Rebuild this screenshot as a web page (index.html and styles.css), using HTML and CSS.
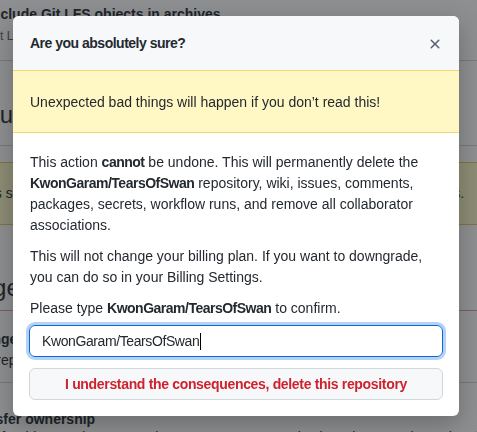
FILE: index.html
```html
<!DOCTYPE html>
<html lang="en">
<head>
<meta charset="utf-8">
<title>Delete repository</title>
<link rel="stylesheet" href="styles.css">
</head>
<body>
<div class="page">
  <div class="check-row">
    <div class="check-label">Include Git LFS objects in archives</div>
    <div class="check-note">Git LFS objects will be included in ZIP and tar archives downloaded for this repository.</div>
  </div>
  <div class="subhead">Default branch</div>
  <div class="page-flash">Rules set here apply to the default branch of this repository and all pull requests.</div>
  <div class="danger-head">Danger Zone</div>
  <div class="danger-box">
    <div class="danger-item first">
      <div class="item-title">Change repository visibility</div>
      <div class="item-desc">This repository is currently public.</div>
    </div>
    <div class="danger-item">
      <div class="item-title">Transfer ownership</div>
      <div class="item-desc">Transfer this repository to another user or to an organization where you have the ability to create repositories.</div>
    </div>
  </div>
</div>

<div class="overlay"></div>

<div class="modal" role="dialog">
  <div class="modal-header">
    <h1 class="modal-title">Are you absolutely sure?</h1>
    <button class="close" aria-label="Close">
      <svg width="16" height="16" viewBox="0 0 16 16"><path fill="currentColor" d="M3.72 3.72a.75.75 0 0 1 1.06 0L8 6.94l3.22-3.22a.749.749 0 0 1 1.275.326.749.749 0 0 1-.215.734L9.06 8l3.22 3.22a.749.749 0 0 1-.326 1.275.749.749 0 0 1-.734-.215L8 9.06l-3.22 3.22a.751.751 0 0 1-1.042-.018.751.751 0 0 1-.018-1.042L6.94 8 3.72 4.78a.75.75 0 0 1 0-1.06Z"/></svg>
    </button>
  </div>
  <div class="modal-flash">Unexpected bad things will happen if you don’t read this!</div>
  <div class="modal-body">
    <p>This action <strong>cannot</strong> be undone. This will permanently delete the <strong>KwonGaram/TearsOfSwan</strong> repository, wiki, issues, comments, packages, secrets, workflow runs, and remove all collaborator associations.</p>
    <p>This will not change your billing plan. If you want to downgrade, you can do so in your Billing Settings.</p>
    <p class="last">Please type <strong>KwonGaram/TearsOfSwan</strong> to confirm.</p>
    <div class="field" role="textbox"><span>KwonGaram/TearsOfSwan</span><span class="caret"></span></div>
    <button class="danger-btn">I understand the consequences, delete this repository</button>
  </div>
</div>
</body>
</html>
```

FILE: styles.css
```css
html, body {
  margin: 0;
  padding: 0;
  width: 477px;
  height: 432px;
  overflow: hidden;
  background: #ffffff;
}

body {
  font-family: "Liberation Sans", Arial, sans-serif;
  font-size: 14px;
  line-height: 21px;
  color: #24292f;
  position: relative;
}

/* background settings page */
.page {
  margin-left: -51px;
  width: 640px;
  display: flex;
  flex-direction: column;
}

.check-row {
  padding: 4px 0 15px 39px;
  border-bottom: 1px solid #d0d7de;
}

.check-label {
  font-weight: 700;
}

.check-note {
  font-size: 12px;
  line-height: 18px;
  color: #57606a;
  margin-top: 2px;
}

.subhead {
  margin-top: 36px;
  font-size: 24px;
  line-height: 36px;
  padding-bottom: 12px;
  border-bottom: 1px solid #d0d7de;
}

.page-flash {
  margin-top: 16px;
  padding: 20px 16px;
  background: #fff8c5;
  border: 1px solid rgba(212, 167, 44, 0.6);
  border-radius: 6px;
}

.danger-head {
  margin-top: 45px;
  font-size: 24px;
  line-height: 36px;
}

.danger-box {
  margin-top: 4px;
  border: 1px solid rgba(207, 34, 46, 0.45);
  border-radius: 6px;
}

.danger-item {
  padding: 18px 16px 12px;
}

.danger-item + .danger-item {
  border-top: 1px solid #d0d7de;
  padding-top: 28px;
}

.item-title {
  font-weight: 700;
  line-height: 16px;
}

.first .item-title {
  line-height: 21px;
}

.item-desc {
  line-height: 20px;
}

.overlay {
  position: fixed;
  inset: 0;
  background: rgba(27, 31, 36, 0.5);
}

/* modal */
.modal {
  position: absolute;
  left: 13px;
  top: 16px;
  width: 446px;
  background: #ffffff;
  border-radius: 6px;
  box-shadow: 0 8px 24px rgba(0, 0, 0, 0.25);
  overflow: hidden;
}

.modal-header {
  display: flex;
  align-items: center;
  justify-content: space-between;
  padding: 17px 16px 16px;
  background: #f6f8fa;
}

.modal-title {
  margin: 0 0 0 1px;
  font-size: 14px;
  line-height: 21px;
  font-weight: 700;
  letter-spacing: -0.5px;
}

.close {
  display: flex;
  padding: 0;
  border: 0;
  background: none;
  color: #57606a;
}

.modal-flash {
  padding: 21px 16px 19px 17px;
  background: #fff8c5;
  border-bottom: 1px solid #f2d675;
  border-top: 1px solid #f2d675;
}

.modal-body {
  padding: 19px 16px 16px;
  display: flex;
  flex-direction: column;
}

.modal-body p {
  margin: 0 0 10px;
  padding-left: 1px;
}

.modal-body p.last {
  margin-bottom: 6px;
}

.modal-body strong {
  font-weight: 700;
  letter-spacing: -0.5px;
}

.field {
  height: 32px;
  box-sizing: border-box;
  display: flex;
  align-items: center;
  padding: 0 12px;
  border: 1px solid #0969da;
  border-radius: 6px;
  box-shadow: 0 0 0 3px rgba(9, 105, 218, 0.3);
  color: #24292f;
  letter-spacing: -0.4px;
}

.caret {
  width: 1px;
  height: 17px;
  background: #000000;
  margin-left: 1px;
}

.danger-btn {
  margin-top: 11px;
  height: 32px;
  font-family: inherit;
  font-size: 14px;
  font-weight: 700;
  letter-spacing: -0.33px;
  color: #cf222e;
  background: #f6f8fa;
  border: 1px solid #d0d7de;
  border-radius: 6px;
}
```
